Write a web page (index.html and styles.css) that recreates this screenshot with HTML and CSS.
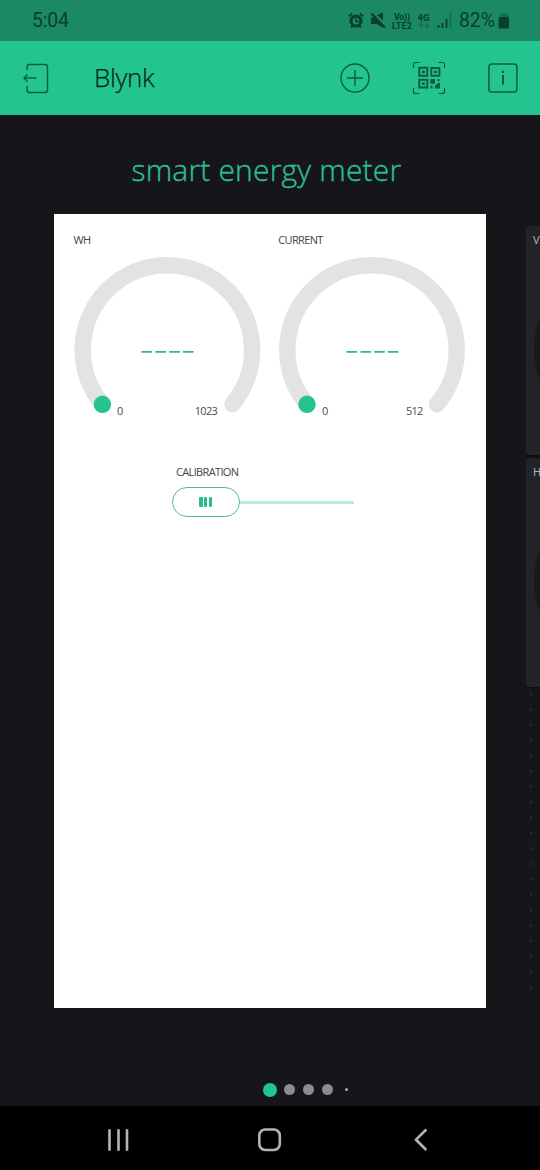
FILE: index.html
```html
<!DOCTYPE html>
<html lang="en">
<head>
<meta charset="utf-8">
<title>Blynk</title>
<link rel="stylesheet" href="styles.css">
</head>
<body>
<div class="screen">
  <div class="status">
    <span class="time">5:04</span>
    <svg class="status-icons" width="106" height="41" viewBox="346 0 106 41">
      <circle cx="356" cy="21" r="5" fill="none" stroke="#08402c" stroke-width="3"/>
      <path d="M349 16.500l3-3M363 16.500l-3-3M351 27.500l2-2M361 27.500l-2-2" stroke="#08402c" stroke-width="2"/>
      <path d="M356 18v3.500h3" fill="none" stroke="#08402c" stroke-width="1.300"/>
      <path d="M371 17.500h3.500l8.500 9v1.500l-6-4h-6zM377 15l6-2.500v8z" fill="#08402c"/>
      <path d="M371.500 13.500l13.500 14" stroke="#08402c" stroke-width="2"/>
      <text class="net" x="394" y="19.500" textLength="16">Vo))</text>
      <text class="net" x="392" y="28.700" textLength="20">LTE2</text>
      <text class="net g4" x="417.500" y="20.500" textLength="12">4G</text>
      <path d="M421 28v-5m-2 2.500l2-2.500 2 2.500M427 23v5m-2-2.500l2 2.500 2-2.500" fill="none" stroke="#126e4c" stroke-width="1.200"/>
      <path d="M438.500 28v-3M442.500 28v-5M446.500 28v-9" stroke="#08402c" stroke-width="1.800"/>
      <path d="M450.500 28v-15" stroke="#147150" stroke-width="1.800"/>
    </svg>
    <span class="percent">82%</span>
    <svg class="battery" width="12" height="18" viewBox="0 0 12 18">
      <path d="M3.500 2V.7h5V2l2.500 1.500V6H1V3.500z" fill="#126e4c"/>
      <rect x=".5" y="5" width="10.500" height="11.500" rx="1.500" fill="#08402c"/>
    </svg>
  </div>

  <header class="toolbar">
    <svg class="exit" width="28" height="32" viewBox="22.500 62 28 32" fill="none" stroke="#0c5d40" stroke-width="1.400">
      <path d="M27.500 70v-3q0-2.500 2.500-2.500h15.500q2.500 0 2.500 2.500v23q0 2.500-2.500 2.500H30q-2.500 0-2.500-2.500v-4M37 78H24.500M28 74.500L24.500 78l3.500 3.500"/>
    </svg>
    <span class="brand">Blynk</span>
    <svg class="add" width="32" height="32" viewBox="0 0 32 32" fill="none" stroke="#0c5d40" stroke-width="1.400">
      <circle cx="16" cy="16" r="14"/><path d="M16 8v16M8 16h16"/>
    </svg>
    <svg class="qr" width="34" height="34" viewBox="412 61 34 34" fill="none" stroke="#0c5d40">
      <path stroke-width="1.200" d="M413.500 68v-3.500q0-2 2-2h4M438.500 62.500h4q2 0 2 2V68M444.500 88v3.500q0 2-2 2h-4M419.500 93.500h-4q-2 0-2-2V88"/>
      <path stroke-width="2" d="M419.300 67.700h8v8h-8zM431.300 68h8v7.700h-8zM419.300 79.800h8v7.700h-8z"/>
      <path fill="#0c5d40" stroke="none" d="M422 70.500h2.800v2.800H422zM434 70.500h2.800v2.800H434zM422 82.300h2.800v2.800H422zM430.300 79h4.700v4.700h-4.700zM437.500 79h2v2.200h-2zM435 85.500l3-2.500h2v5.500h-5zM430.500 85.500h2v3h-2z"/>
    </svg>
    <svg class="info" width="32" height="32" viewBox="0 0 32 32">
      <rect x="1.900" y="2" width="28" height="28" rx="3" fill="none" stroke="#0c5d40" stroke-width="1.500"/>
      <path d="M16 13v9.500" stroke="#0c5d40" stroke-width="2"/><circle cx="16" cy="10" r="1.300" fill="#0c5d40"/>
    </svg>
  </header>

  <main class="project">
    <h1 class="title">smart energy meter</h1>
    <div class="pages">
      <section class="page">
        <div class="gauge">
          <span class="label wh">WH</span>
          <svg width="188" height="164" viewBox="-93.400 -94 188 164">
            <path class="track" d="M-65 54.300A84.700 84.700 0 1 1 65 54.300"/>
            <circle cx="-65" cy="54.300" r="8.700" fill="#24c48e"/>
            <path class="dashes" d="M-26 1.900h10.600M-12 1.900h10.600M1.900 1.900h10.600M15.500 1.900h10.600"/>
            <text class="scale" x="-50.500" y="64.800">0</text>
            <text class="scale" x="49.700" y="64.800" text-anchor="end">1023</text>
          </svg>
        </div>
        <div class="gauge">
          <span class="label current">CURRENT</span>
          <svg width="188" height="164" viewBox="-94 -94 188 164">
            <path class="track" d="M-65 54.300A84.700 84.700 0 1 1 65 54.300"/>
            <circle cx="-65" cy="54.300" r="8.700" fill="#24c48e"/>
            <path class="dashes" d="M-25.500 1.900h10.600M-11.500 1.900h10.600M2.200 1.900h10.600M15.800 1.900h10.600"/>
            <text class="scale" x="-50" y="64.800">0</text>
            <text class="scale" x="50.700" y="64.800" text-anchor="end">512</text>
          </svg>
        </div>
        <div class="slider">
          <span class="label calibration">CALIBRATION</span>
          <div class="rail">
            <div class="handle"><i></i><i></i><i></i></div>
            <div class="line"></div>
          </div>
        </div>
      </section>
      <section class="next">
        <div class="tile"><span>V</span>
          <svg width="10" height="200" viewBox="0 0 10 200"><circle cx="93" cy="100" r="92" fill="#17181b"/></svg></div>
        <div class="tile"><span>H</span>
          <svg width="10" height="200" viewBox="0 0 10 200"><circle cx="93" cy="100" r="92" fill="#17181b"/></svg></div>
        <div class="grid-dots"></div>
      </section>
    </div>
    <div class="pager"><i class="on"></i><i></i><i></i><i></i><i class="tiny"></i></div>
  </main>

  <nav class="nav">
    <svg width="540" height="64" viewBox="0 1106 540 64" fill="none" stroke="#b4b4b4" stroke-width="2.600">
      <path d="M109.500 1129.300v21.400M118.500 1129.300v21.400M127 1129.300v21.400"/>
      <rect x="259.300" y="1129.500" width="20.500" height="20.500" rx="6"/>
      <path d="M426.300 1129.500L416 1139.700l10.300 10.300"/>
    </svg>
  </nav>
</div>
</body>
</html>
```
FILE: styles.css
```css
* { box-sizing: border-box; }
body { margin: 0; background: #15151a; font-family: "Open Sans", sans-serif; }
svg { display: block; flex: none; }
.screen { width: 540px; height: 1170px; display: flex; flex-direction: column; overflow: hidden; }

.status { height: 41px; background: #1b8963; display: flex; align-items: center; color: #08402c; font-family: Roboto, sans-serif; font-size: 19.500px; }
.time { width: 314px; margin-left: 32px; letter-spacing: -.2px; }
.net { font: 700 8.800px Roboto, sans-serif; fill: #08402c; }
.g4 { font-size: 9.500px; }
.percent { width: 38.500px; margin-left: 7px; letter-spacing: -.1px; }
.status-icons { width: 106px; }

.toolbar { height: 74px; background: #24c48e; display: flex; align-items: center; padding-left: 22px; }
.brand { width: 245px; margin-left: 44px; font-size: 26px; font-weight: 300; line-height: 32px; color: #06281c; letter-spacing: -.35px; -webkit-text-stroke: .25px #06281c; position: relative; top: -1px; }
.qr { margin-left: 41px; }
.info { margin-left: 41px; }

.project { height: 991px; background: #15151a; display: flex; flex-direction: column; }
.title { margin: 0; height: 99px; padding: 35px 0 0 131.500px; font-weight: 300; font-size: 30px; line-height: 40px; color: #2cc094; letter-spacing: .18px; -webkit-text-stroke: .35px #2cc094; white-space: nowrap; }
.pages { display: flex; align-items: flex-start; gap: 40px; padding-left: 54px; height: 794px; overflow: hidden; }
.page { flex: none; width: 432px; height: 794px; background: #fff; padding: 19px 0 0 19.500px; display: grid; grid-template-columns: 204.800px 204.800px; grid-template-rows: 232px 80px; }
.label { display: block; height: 14px; font-size: 11px; line-height: 14px; color: #444; letter-spacing: -.65px; white-space: nowrap; }
.gauge svg { margin-top: 9px; }
.track { fill: none; stroke: #e1e4e3; stroke-width: 16.500; stroke-linecap: round; }
.dashes { stroke: #2cba91; stroke-width: 1.900; }
.scale { font: 11px "Open Sans", sans-serif; fill: #4a4a4a; letter-spacing: -.7px; }
.slider { grid-column: 1 / 3; padding-left: 98.500px; }
.slider .label { padding-left: 4px; }
.rail { display: flex; align-items: center; margin-top: 8px; }
.handle { width: 67.500px; height: 30px; border: 1px solid #4dbb98; border-radius: 15px; display: flex; justify-content: center; align-items: center; gap: 1.600px; }
.handle i { width: 3.300px; height: 10.500px; border-radius: 1px; background: #28bd8b; }
.line { width: 114.500px; height: 3px; background: #bdeedd; }

.next { flex: none; width: 14px; height: 780px; margin-top: 12px; overflow: hidden; }
.tile { height: 229px; margin-bottom: 3px; padding: 7px 0 0 7px; background: #222328; overflow: hidden; border-radius: 2px 0 0 2px; box-shadow: 0 0 2px 1px #0d0d10; }
.tile span { display: block; font: 11px/14px "Open Sans", sans-serif; color: #b8b8bc; }
.tile svg { margin-top: 2px; }
.grid-dots { height: 310px; background: radial-gradient(circle at 5px 4px, #26272c 1px, transparent 1.800px) 0 0 / 14px 15.450px repeat-y; }

.pager { display: flex; align-items: center; gap: 8px; padding-left: 263px; margin-top: 74px; height: 15px; }
.pager i { width: 11px; height: 11px; border-radius: 50%; background: #8d8c91; }
.pager .on { width: 14px; height: 14px; margin-right: -1.500px; background: #24c48e; }
.pager .tiny { width: 3px; height: 3px; margin-left: 4px; background: #aaa; }
.nav { height: 64px; background: #000; }
```
